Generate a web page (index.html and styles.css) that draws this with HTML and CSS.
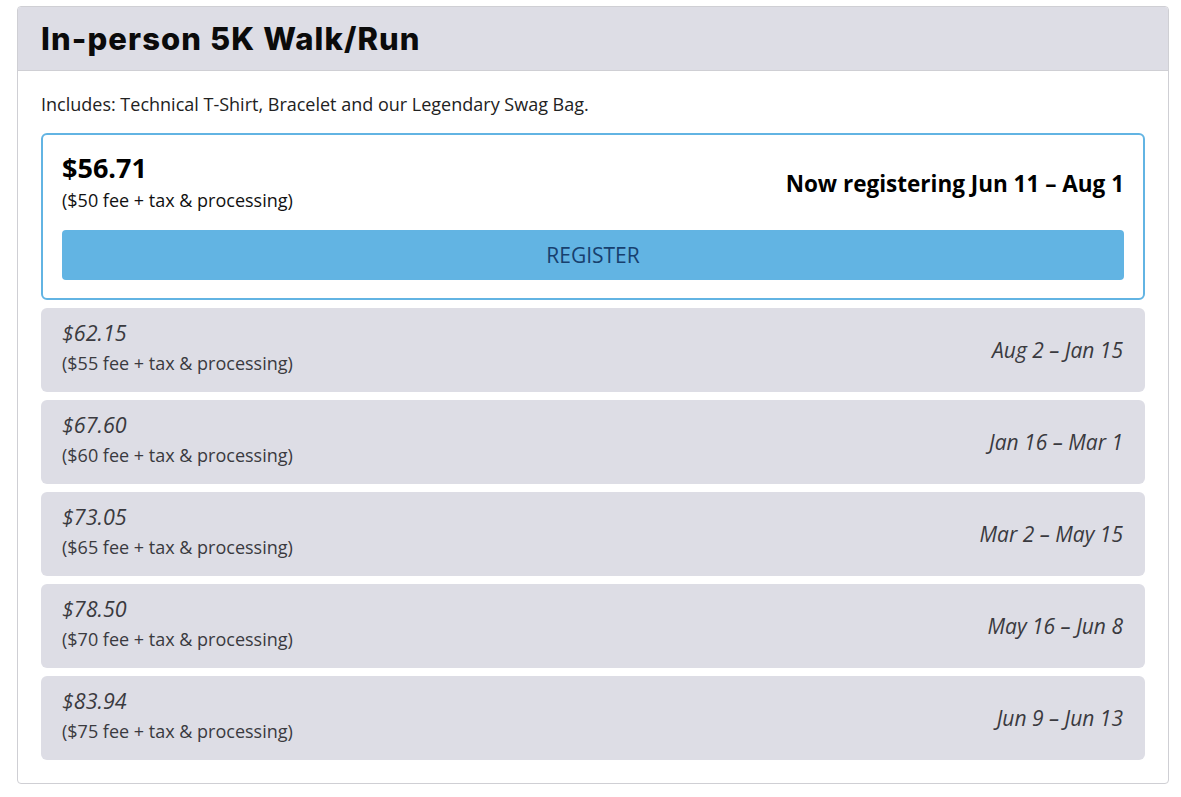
FILE: index.html
```html
<!DOCTYPE html>
<html lang="en">
<head>
<meta charset="utf-8">
<title>In-person 5K Walk/Run</title>
<link rel="stylesheet" href="styles.css">
</head>
<body>
<div class="card">
  <div class="card-header">
    <h2 class="title">In-person 5K Walk/Run</h2>
  </div>
  <div class="card-body">
    <p class="includes">Includes: Technical T-Shirt, Bracelet and our Legendary Swag Bag.</p>
    <div class="tiers">
      <div class="tier tier-active">
        <div class="tier-row">
          <div class="tier-info">
            <div class="price">$56.71</div>
            <div class="fee">($50 fee + tax &amp; processing)</div>
          </div>
          <div class="dates">Now registering Jun 11 – Aug 1</div>
        </div>
        <button class="register">REGISTER</button>
      </div>
      <div class="tier">
        <div class="tier-row">
          <div class="tier-info">
            <div class="price">$62.15</div>
            <div class="fee">($55 fee + tax &amp; processing)</div>
          </div>
          <div class="dates">Aug 2 – Jan 15</div>
        </div>
      </div>
      <div class="tier">
        <div class="tier-row">
          <div class="tier-info">
            <div class="price">$67.60</div>
            <div class="fee">($60 fee + tax &amp; processing)</div>
          </div>
          <div class="dates">Jan 16 – Mar 1</div>
        </div>
      </div>
      <div class="tier">
        <div class="tier-row">
          <div class="tier-info">
            <div class="price">$73.05</div>
            <div class="fee">($65 fee + tax &amp; processing)</div>
          </div>
          <div class="dates">Mar 2 – May 15</div>
        </div>
      </div>
      <div class="tier">
        <div class="tier-row">
          <div class="tier-info">
            <div class="price">$78.50</div>
            <div class="fee">($70 fee + tax &amp; processing)</div>
          </div>
          <div class="dates">May 16 – Jun 8</div>
        </div>
      </div>
      <div class="tier">
        <div class="tier-row">
          <div class="tier-info">
            <div class="price">$83.94</div>
            <div class="fee">($75 fee + tax &amp; processing)</div>
          </div>
          <div class="dates">Jun 9 – Jun 13</div>
        </div>
      </div>
    </div>
  </div>
</div>
</body>
</html>
```

FILE: styles.css
```css
* { box-sizing: border-box; }

body {
  margin: 0;
  padding: 6px 0 0 17px;
  background: #ffffff;
  font-family: "Open Sans", "Noto Sans", sans-serif;
  color: #212121;
}

.card {
  width: 1152px;
  border: 1px solid #cfcfd4;
  border-radius: 4px;
  overflow: hidden;
  background: #fff;
}

.card-header {
  background: #dddde5;
  border-bottom: 1px solid #cfcfd4;
  height: 64px;
  display: flex;
  align-items: center;
  padding: 0 23px 0;
}

.title {
  margin: 0;
  font-family: "Inter", "Roboto", sans-serif;
  font-weight: 800;
  font-size: 31px;
  letter-spacing: 1.1px;
  color: #0b0b0b;
}

.card-body {
  padding: 20px 23px 23px;
}

.includes {
  margin: 0 0 15px;
  font-size: 18px;
  line-height: 27px;
  color: #222;
}

.tiers {
  display: flex;
  flex-direction: column;
  gap: 8px;
}

.tier {
  background: #dddde5;
  border-radius: 6px;
  padding: 10px 22px 0 21px;
  height: 84px;
  color: #3a3a3f;
}

.tier-row {
  display: flex;
  justify-content: space-between;
  align-items: center;
}

.price {
  font-style: italic;
  font-size: 21.5px;
  line-height: 30px;
}

.fee {
  font-size: 18px;
  line-height: 27px;
  margin-top: 2px;
}

.dates {
  font-style: italic;
  font-size: 21px;
  line-height: 30px;
  padding-top: 4px;
}

.tier-active {
  background: #fff;
  border: 2px solid #62b4e3;
  height: 167px;
  padding: 15px 19px 18px 19px;
  color: #000;
}

.tier-active .price {
  font-style: normal;
  font-weight: 700;
  font-size: 27px;
  line-height: 36px;
}

.tier-active .fee {
  margin-top: 1px;
  color: #111;
}

.tier-active .dates {
  font-style: normal;
  font-weight: 700;
  font-size: 22.5px;
  line-height: 30px;
  padding-top: 4px;
}

.register {
  display: block;
  width: 100%;
  margin-top: 16px;
  height: 50px;
  border: none;
  border-radius: 4px;
  background: #62b4e3;
  color: #17406e;
  font-family: "Open Sans", "Noto Sans", sans-serif;
  font-size: 21px;
  cursor: pointer;
}
```
